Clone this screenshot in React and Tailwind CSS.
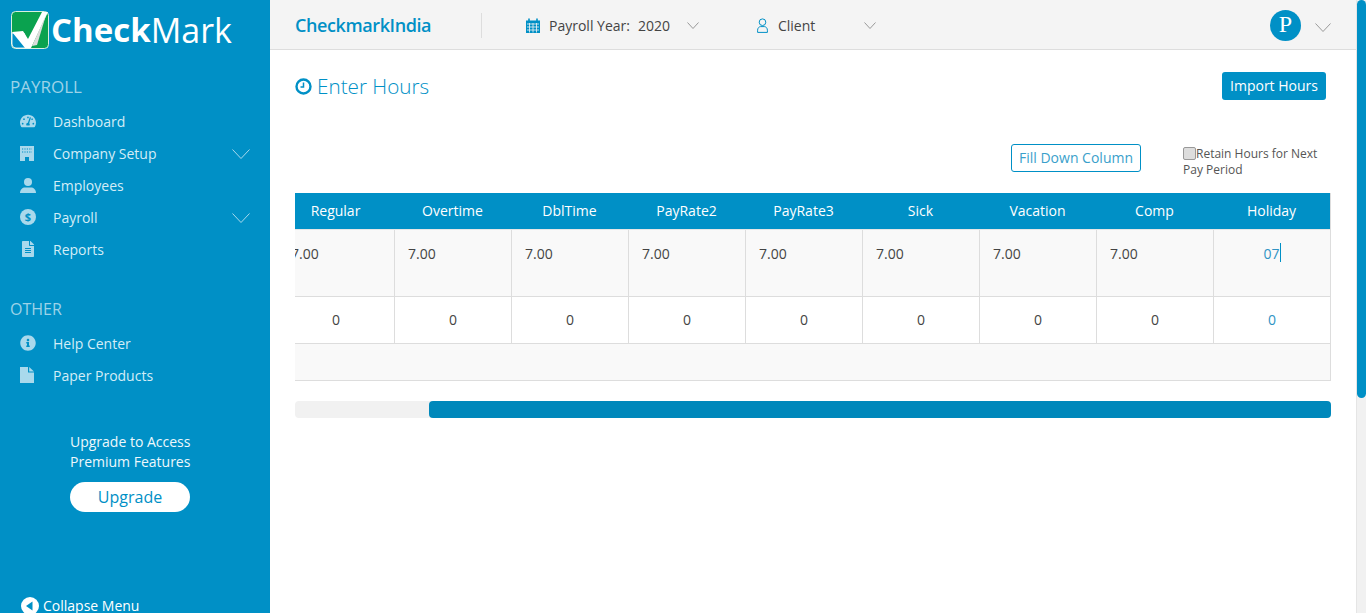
import React from "react";
import { FaTachometerAlt, FaFileAlt, FaInfoCircle } from "react-icons/fa";

const columns = ["Regular", "Overtime", "DblTime", "PayRate2", "PayRate3", "Sick", "Vacation", "Comp", "Holiday"];

const Chevron = ({ w, h, className }) => (
  <svg width={w} height={h} viewBox={`0 0 ${w} ${h}`} fill="none" stroke="currentColor" className={className}>
    <path d={`M0.5 0.5L${w / 2} ${h - 0.5}L${w - 0.5} 0.5`} />
  </svg>
);

const DollarIcon = () => (
  <svg width="16" height="16" viewBox="0 0 16 16">
    <circle cx="8" cy="8" r="8" fill="currentColor" />
    <text x="8" y="12" textAnchor="middle" fontSize="11" fontWeight="700" fill="#0090c6" fontFamily="Open Sans, sans-serif">$</text>
  </svg>
);

const BuildingIcon = () => (
  <svg width="14" height="15" viewBox="0 0 14 15">
    <path d="M0 0h14v15H9v-4H5v4H0z" fill="currentColor" />
    <path d="M2 3h10M2 6h10" stroke="#0090c6" strokeWidth="1.2" strokeDasharray="1.2 1.2" />
  </svg>
);

const UserIcon = () => (
  <svg width="16" height="15" viewBox="0 0 16 15" fill="currentColor">
    <circle cx="8" cy="4" r="4" />
    <path d="M0 15c0-3.6 2.6-5.6 5-5.6h6c2.4 0 5 2 5 5.6z" />
  </svg>
);

const PaperIcon = () => (
  <svg width="14" height="16" viewBox="0 0 14 16" fill="currentColor">
    <path d="M0 0h8v5.5h6V16H0z" />
    <path d="M9.2 0L14 4.4H9.2z" />
  </svg>
);

const CalendarIcon = () => (
  <svg width="14" height="15" viewBox="0 0 14 15" className="ml-[44px]">
    <path d="M0 2.5h14V15H0z" fill="#0090c6" />
    <path d="M3 0.5v3M11 0.5v3" stroke="#0090c6" strokeWidth="1.6" />
    <path d="M1 6h12M1 9h12M1 12h12M3.5 5v9.5M7 5v9.5M10.5 5v9.5" stroke="#f4f4f4" strokeWidth="0.8" />
  </svg>
);

const ClientIcon = () => (
  <svg width="11" height="15" viewBox="0 0 11 15" fill="none" stroke="#0090c6" className="ml-[58px]">
    <circle cx="5.5" cy="4.2" r="3.3" />
    <path d="M0.6 14.4v-2.2c0-2.2 1.6-3.6 3-3.6h3.8c1.4 0 3 1.4 3 3.6v2.2z" />
  </svg>
);

const Logo = () => (
  <svg width="38" height="38" viewBox="0 0 38 38" className="shrink-0">
    <rect x="0.5" y="0.5" width="37" height="37" rx="4" fill="#0aa24f" stroke="#d8f0e0" />
    <path d="M1 22h12l6 15H5a4 4 0 0 1-4-4z" fill="#0090c6" stroke="#fff" strokeWidth="0.8" />
    <path d="M1 21l11-1 5 8L31 1h6L20 37h-6z" fill="#fff" />
    <path d="M21 35L35 4l-9 30z" fill="#dcdcdc" />
  </svg>
);

const NavItem = ({ icon, label, arrow }) => (
  <div className="flex items-center h-8 pl-5 pr-5 text-[#d3edf7] text-[14px]">
    <span className="w-[33px] flex text-[#a9d9ec] text-[16px]">{icon}</span>
    <span className="flex-1">{label}</span>
    {arrow && <Chevron w={18} h={10} className="text-[#a9d9ec] mt-px" />}
  </div>
);

const Sidebar = () => (
  <aside className="w-[270px] shrink-0 h-full bg-[#0090c6] relative overflow-hidden">
    <div className="flex items-center pl-[11px] pt-[11px] h-[48px]">
      <Logo />
      <span className="text-white text-[33px] leading-none font-bold ml-[2px]">Check</span>
      <span className="text-white text-[34px] leading-none">Mark</span>
    </div>

    <h3 className="text-[#9dd3e8] text-[17px] leading-[22px] pl-[10px] mt-[28px] mb-[7px]">PAYROLL</h3>
    <NavItem icon={<FaTachometerAlt />} label="Dashboard" />
    <NavItem icon={<BuildingIcon />} label="Company Setup" arrow />
    <NavItem icon={<UserIcon />} label="Employees" />
    <NavItem icon={<DollarIcon />} label="Payroll" arrow />
    <NavItem icon={<FaFileAlt />} label="Reports" />

    <h3 className="text-[#9dd3e8] text-[16px] leading-[22px] pl-[10px] mt-[33px] mb-[7px]">OTHER</h3>
    <NavItem icon={<FaInfoCircle />} label="Help Center" />
    <NavItem icon={<PaperIcon />} label="Paper Products" />

    <div className="ml-[70px] mt-[41px] w-[120px] text-[#eef8fc] text-[14px] leading-5 whitespace-nowrap">
      <p>Upgrade to Access</p>
      <p>Premium Features</p>
      <button className="mt-[10px] w-[120px] h-[30px] rounded-full bg-white text-[#0090c6] text-[16px]">Upgrade</button>
    </div>

    {/* Collapse sits on the bottom edge and is cut by the window */}
    <div className="absolute left-[21px] top-[595px] flex items-center gap-1 text-white text-[14px]">
      <svg width="18" height="18" viewBox="0 0 18 18">
        <circle cx="9" cy="9" r="9" fill="#fff" />
        <path d="M11.5 4.5v9L5 9z" fill="#0090c6" />
      </svg>
      <span>Collapse Menu</span>
    </div>
  </aside>
);

const Header = () => (
  <header className="h-[50px] shrink-0 flex items-center pt-[2px] bg-[#f4f4f4] border-b border-[#dddddd] text-[14px] text-[#444]">
    <span className="ml-[25px] w-[186px] text-[18px] font-semibold text-[#0090c6] tracking-[-0.4px]">CheckmarkIndia</span>
    <span className="h-[25px] w-px bg-[#dddddd]" />
    <CalendarIcon />
    <span className="ml-[9px]">Payroll Year:</span>
    <span className="ml-2">2020</span>
    <Chevron w={12} h={7} className="ml-[17px] text-[#999]" />
    <ClientIcon />
    <span className="ml-[10px] w-[86px]">Client</span>
    <Chevron w={12} h={7} className="text-[#999]" />
    <span className="ml-auto w-[31px] h-[31px] rounded-full bg-[#0090c6] text-white text-[24px] leading-[29px] text-center font-['Liberation_Serif',serif]">P</span>
    <Chevron w={16} h={9} className="ml-[14px] mr-[25px] mt-[3px] text-[#999]" />
  </header>
);

const HoursTable = () => (
  <div className="mt-[15px] overflow-hidden w-[1036px] h-[188px] border-r border-[#dddddd]">
    <div className="-ml-[17px] w-[1053px] grid grid-cols-[repeat(9,117px)] text-[14px] text-[#444]">
      {columns.map((c) => (
        <div key={c} className="h-[37px] pb-px pr-[2px] bg-[#0090c6] text-white flex items-center justify-center border-b border-[#e6e6e6]">{c}</div>
      ))}
      {columns.map((c, i) => (
        <div key={c} className="h-[67px] bg-[#f9f9f9] border-r border-b border-[#dddddd] pl-[13px] pt-[13px] leading-[22px]">
          {i < 8 ? "7.00" : (
            <div className="flex justify-center -ml-[13px] text-[#2f93c4]">07<span className="w-px h-[19px] bg-[#0090c6]" /></div>
          )}
        </div>
      ))}
      {columns.map((c, i) => (
        <div key={c} className={`h-[47px] pb-[2px] bg-white border-r border-b border-[#dddddd] flex items-center justify-center ${i === 8 ? "text-[#2f93c4]" : ""}`}>0</div>
      ))}
    </div>
    <div className="h-[37px] bg-[#f9f9f9] border-b border-[#dddddd]" />
  </div>
);

const App = () => (
  <div className="flex h-screen overflow-hidden bg-white font-['Open_Sans',sans-serif]">
    <Sidebar />
    <main className="flex-1 flex flex-col min-w-0">
      <Header />
      <div className="pl-[25px] pr-[25px]">
        <div className="flex items-start justify-between pt-[22px] pr-[5px]">
          <h1 className="flex items-center gap-[5px] text-[#0090c6] text-[20.7px] leading-[30px] -mt-px font-light">
            <svg width="17" height="17" viewBox="0 0 17 17" fill="none" stroke="#0090c6">
              <circle cx="8.5" cy="8.5" r="7" strokeWidth="2.4" />
              <path d="M8.5 4.5v4.5H5.5" strokeWidth="1.5" />
            </svg>
            Enter Hours
          </h1>
          <button className="w-[104px] h-[28px] pb-[2px] rounded-[3px] bg-[#0090c6] text-white text-[14px]">Import Hours</button>
        </div>
        <div className="flex items-start mt-[43px] ml-[716px]">
          <button className="w-[130px] h-[28px] pb-[2px] rounded-[3px] border border-[#0090c6] text-[#3a9fcb] text-[14px]">Fill Down Column</button>
          <label className="ml-[42px] mt-[2px] w-[145px] text-[12px] leading-[16px] text-[#555]">
            <input type="checkbox" className="appearance-none w-[13px] h-[13px] align-[-2px] bg-[#dddddd] border border-[#999] rounded-[2px]" />
            Retain Hours for Next Pay Period
          </label>
        </div>
        <HoursTable />
        {/* table scrollbar */}
        <div className="mt-[20px] w-[1036px] h-[17px] rounded bg-[#f1f1f1] flex justify-end">
          <div className="w-[902px] h-full rounded bg-[#0088bb]" />
        </div>
      </div>
    </main>
    {/* page scrollbar */}
    <div className="w-[10px] shrink-0 h-full bg-[#f1f1f1] border-l border-[#e5e5e5]">
      <div className="h-[398px] bg-[#0090c6] rounded-full" />
    </div>
  </div>
);

export default App;
